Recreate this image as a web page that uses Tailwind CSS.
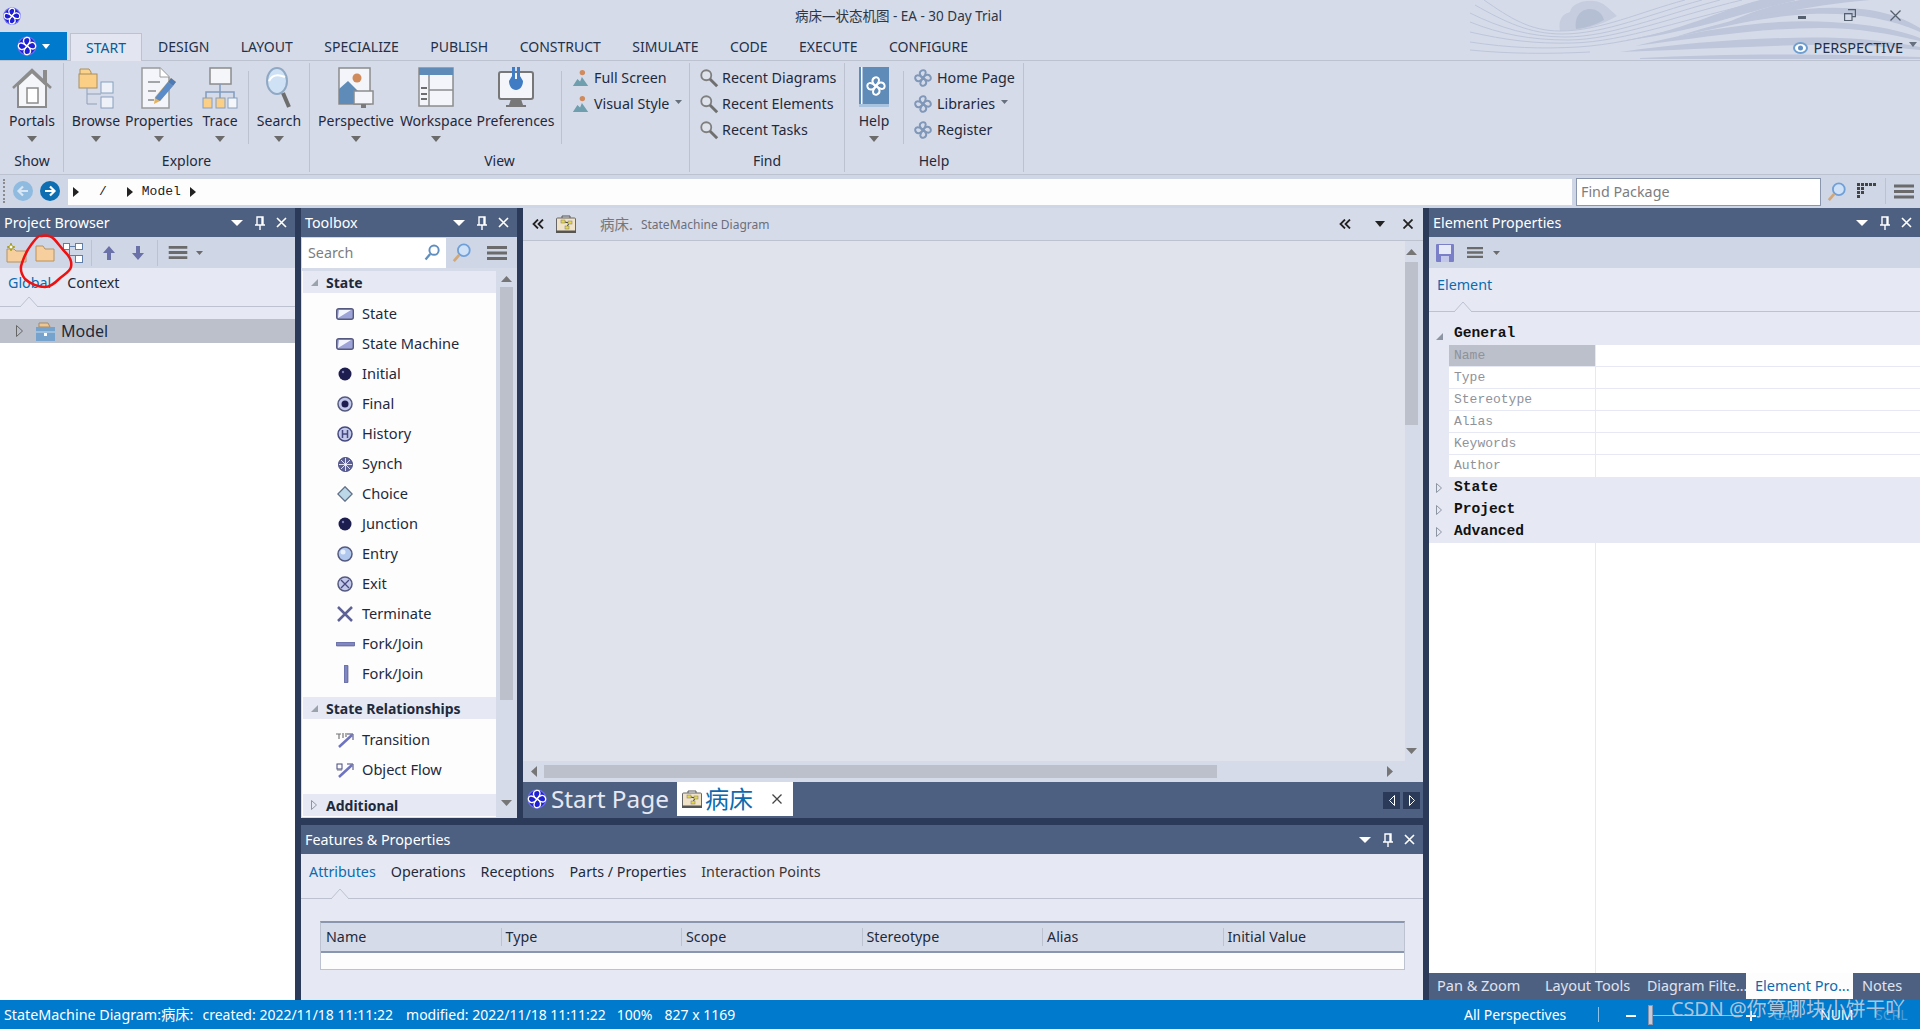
<!DOCTYPE html>
<html lang="en">
<head>
  <meta charset="UTF-8">
  <title>病床—状态机图 - EA - 30 Day Trial</title>
  <script src="https://cdn.jsdelivr.net/npm/@tailwindcss/browser@4"></script>
</head>
<body class="h-screen w-screen overflow-hidden bg-[#d6dbe9] text-[14.3px] text-[#1e2a3c] font-['Noto_Sans','Noto_Sans_CJK_SC',sans-serif]">

  <!-- shared icons -->
  <svg class="hidden">
    <symbol id="lobes" viewBox="0 0 20 20">
      <path d="M10 10C6 8 5 3 9 1.500c4-1 6 3 1 8.500z"/>
      <path d="M10 10C12 6 17 5 18.500 9c1 4-3 6-8.500 1z"/>
      <path d="M10 10C14 12 15 17 11 18.500c-4 1-6-3-1-8.500z"/>
      <path d="M10 10C8 14 3 15 1.500 11c-1-4 3-6 8.500-1z"/>
    </symbol>
    <symbol id="knot-blue" viewBox="0 0 20 20">
      <circle cx="10" cy="10" r="9.700" fill="#6a6aee"/>
      <circle cx="10" cy="10" r="8.400" fill="#1f1fd6"/>
      <use href="#lobes" width="20" height="20" fill="none" stroke="#fff" stroke-width="1.300"/>
    </symbol>
    <symbol id="knot-grey" viewBox="0 0 20 20">
      <use href="#lobes" width="20" height="20" fill="none" stroke="#7f97b8" stroke-width="2.200"/>
    </symbol>
    <symbol id="panel-ctl" viewBox="0 0 60 14">
      <path d="M2 4h12l-6 6z" fill="#fff"/>
      <path d="M28 1h6v8h-6zM26 9h10M31 9v5M33 1v8" fill="none" stroke="#fff" stroke-width="1.400"/>
      <path d="M48 2l9 9M57 2l-9 9" stroke="#fff" stroke-width="1.600"/>
    </symbol>
    <symbol id="lens-grey" viewBox="0 0 22 22">
      <circle cx="8" cy="8" r="5.500" fill="#dfe3ec" stroke="#7f7f7f" stroke-width="2"/>
      <path d="M12 12l8 8" stroke="#6f6f6f" stroke-width="3.200"/>
    </symbol>
    <symbol id="lens-blue" viewBox="0 0 22 22">
      <circle cx="13" cy="8" r="6.500" fill="#cfe1f7" stroke="#6f9fd8" stroke-width="2"/>
      <path d="M8 13l-6 7" stroke="#d2a878" stroke-width="3"/>
    </symbol>
    <symbol id="person" viewBox="0 0 20 20">
      <circle cx="11.500" cy="4" r="3" fill="#d08a5c"/>
      <path d="M1 19l5-8 3 3 2-5 7 10z" fill="#6f9fae"/>
    </symbol>
    <symbol id="burger" viewBox="0 0 20 14">
      <path d="M0 0h20v3H0zM0 5.500h20v3H0zM0 11h20v3H0z" fill="#6b6b6b"/>
    </symbol>
    <symbol id="state-box" viewBox="0 0 18 12">
      <rect x=".7" y=".7" width="16.600" height="10.600" rx="2" fill="#9ea4d8" stroke="#55597f" stroke-width="1.400"/>
      <path d="M2 10L15 2H3z" fill="#f4f6ff"/>
    </symbol>
    <symbol id="diagram-icon" viewBox="0 0 20 18">
      <path d="M6 3V1h8v2" fill="none" stroke="#555"/>
      <rect x=".5" y="3" width="19" height="14" rx="1" fill="#f0e3c8" stroke="#666"/>
      <rect x="0" y="15.500" width="20" height="2.500" fill="#555"/>
      <path d="M9 7l4 1M13 8l-2 4" stroke="#333"/>
      <rect x="5" y="5" width="4" height="3" fill="#e6d84a" stroke="#777" stroke-width=".5"/>
      <rect x="12" y="6" width="4" height="3" fill="#e6d84a" stroke="#777" stroke-width=".5"/>
      <rect x="9" y="11" width="4" height="3" fill="#e6d84a" stroke="#777" stroke-width=".5"/>
    </symbol>
  </svg>

  <!-- title bar -->
  <div class="relative h-[32px] flex items-center">
    <svg class="w-[18px] h-[18px] ml-[3px]"><use href="#knot-blue"/></svg>
    <div class="ml-[774px] text-[13.5px] whitespace-nowrap text-[#2c3646]">病床—状态机图 - EA - 30 Day Trial</div>
    <svg class="absolute top-0 right-0 w-[450px] h-[60px]" viewBox="0 0 450 60" fill="none">
      <path d="M90 31C88 20 92 14 100 12 102 4 112 0 124 1 134 2 138 8 147 16 130 26 112 30 90 31z" fill="#c5cddf"/>
      <path d="M106 29C104 18 110 9 120 9 127 9 132 13 134 20 125 25 116 28 106 29z" fill="#b5bfd4"/>
      <g stroke="#bdc6da" stroke-width="1">
        <path d="M14 0C40 18 60 31 90 31 130 31 170 12 215 0"/>
        <path d="M5 5C35 22 60 34 92 34 135 34 180 14 232 0"/>
        <path d="M0 13C30 28 60 37 95 37 140 37 190 16 250 0"/>
        <path d="M0 22C30 34 60 40 98 40 145 40 205 16 272 0"/>
        <path d="M0 32C35 40 65 44 102 43 155 42 215 18 300 0"/>
        <path d="M0 42C40 48 70 49 108 47 170 43 235 20 325 0"/>
        <path d="M0 50C40 54 80 54 120 52"/>
      </g>
      <g fill="#bdc6da">
        <path d="M330 0h70C350 4 300 14 250 26 280 12 305 4 330 0z"/>
        <path d="M150 41C210 32 250 10 290 0H325C270 14 215 34 150 41z"/>
        <path d="M205 37C270 16 340 2 400 10 425 14 440 22 450 28v4C420 18 380 12 340 14 290 17 250 28 205 37z"/>
        <path d="M165 46C230 30 300 18 360 22 400 24 430 30 450 38v3C420 34 390 28 350 28 290 28 230 38 165 46z"/>
        <path d="M150 52C220 42 300 36 370 38 400 39 430 43 450 47v3C420 47 380 44 340 45 280 46 210 50 150 52z"/>
        <path d="M170 58C250 54 330 53 450 57v2H170z"/>
      </g>
    </svg>
    <div class="absolute top-0 right-0 h-[32px] w-[130px]">
      <svg class="absolute left-[8px] top-[16px] w-[8px] h-[3px]"><rect width="8" height="3" fill="#55606f"/></svg>
      <svg class="absolute left-[54px] top-[9px] w-[12px] h-[12px]" fill="none" stroke="#55606f" stroke-width="1.200"><path d="M4 .6h7.400v7H8.500M.6 4.600h7.400v7H.6z"/></svg>
      <svg class="absolute left-[100px] top-[10px] w-[11px] h-[11px]" stroke="#55606f" stroke-width="1.300"><path d="M.5.5l10 10M10.500.5l-10 10"/></svg>
    </div>
  </div>

  <!-- menu tabs -->
  <div class="relative h-[28px] flex items-stretch text-[14px] text-[#22304a]">
    <div class="w-[67px] bg-[#007acc] flex items-center justify-center gap-[5px]">
      <svg class="w-[20px] h-[20px]"><use href="#knot-blue"/></svg>
      <svg class="w-[8px] h-[5px]"><path d="M0 0h8L4 5z" fill="#fff"/></svg>
    </div>
    <div class="ml-[3px] w-[72px] mt-[1px] h-[28px] bg-[#e3e6f0] border border-b-0 border-[#bcc2d0] flex items-center justify-center text-[#0b5c96] relative z-10">START</div>
    <div class="flex items-center whitespace-nowrap">
      <span class="ml-[16px]">DESIGN</span>
      <span class="ml-[31.500px]">LAYOUT</span>
      <span class="ml-[31.500px]">SPECIALIZE</span>
      <span class="ml-[31.500px]">PUBLISH</span>
      <span class="ml-[31.500px]">CONSTRUCT</span>
      <span class="ml-[31.500px]">SIMULATE</span>
      <span class="ml-[31.500px]">CODE</span>
      <span class="ml-[31.500px]">EXECUTE</span>
      <span class="ml-[31.500px]">CONFIGURE</span>
    </div>
    <div class="absolute right-[3px] top-[5px] flex items-center">
      <svg class="w-[15px] h-[12px]" viewBox="0 0 15 12"><ellipse cx="7.500" cy="6" rx="6.500" ry="5" fill="#fff" stroke="#6f9fd0" stroke-width="2"/><circle cx="7.500" cy="6" r="2.500" fill="#5f8fc4"/></svg>
      <span class="ml-[5px] text-[14.500px]">PERSPECTIVE</span>
      <svg class="ml-[6px] mb-[6px] w-[8px] h-[5px]"><path d="M0 0h8L4 5z" fill="#66707f"/></svg>
    </div>
  </div>

  <!-- ribbon -->
  <div class="h-[115px] flex border-y border-[#bcc2d0] bg-[#d6dbe9] text-[14px]">
    <!-- Show -->
    <div class="w-[64px] border-r border-[#bcc2d0] my-[2px] flex flex-col">
      <div class="h-[83px] flex">
        <div class="ml-[1px] w-[63px] flex flex-col items-center">
          <svg class="w-[42px] h-[42px] mt-[4px]" viewBox="0 0 42 42" fill="none">
            <path d="M7 40V18L21 5l14 13v22z" fill="#f4f6fa" stroke="#8c8c8c" stroke-width="2"/>
            <path d="M2 21L21 3l19 18" stroke="#8c8c8c" stroke-width="2.500"/><path d="M32 3h4v14h-4z" fill="#8c8c8c"/>
            <rect x="16" y="21" width="11" height="15" fill="#fff" stroke="#8c8c8c" stroke-width="1.500"/>
          </svg>
          <span class="mt-[2px] leading-[20px] whitespace-nowrap">Portals</span>
          <svg class="mt-[5px] w-[10px] h-[6px]"><path d="M0 0h10L5 6z" fill="#6b6b6b"/></svg>
        </div>
      </div>
      <div class="mt-auto h-[24px] flex items-center justify-center pl-[1px] pt-[1px]">Show</div>
    </div>
    <!-- Explore -->
    <div class="w-[246px] border-r border-[#bcc2d0] my-[2px] flex flex-col">
      <div class="h-[83px] flex">
        <div class="w-[64px] flex flex-col items-center">
          <svg class="w-[36px] h-[42px] mt-[4px]" viewBox="0 0 36 42" fill="none">
            <path d="M2 8V2h9l2 3v3" fill="#fbd38d" stroke="#a89060"/><rect x="1" y="7" width="18" height="14" fill="#fbcf85" stroke="#a89060"/>
            <path d="M9 21v16h10M9 27h14" stroke="#8f9fb8"/>
            <rect x="23" y="15" width="12" height="11" fill="#eef2f8" stroke="#86a0c0"/>
            <rect x="23" y="30" width="12" height="11" fill="#eef2f8" stroke="#86a0c0"/>
          </svg>
          <span class="mt-[2px] leading-[20px] whitespace-nowrap">Browse</span>
          <svg class="mt-[5px] w-[10px] h-[6px]"><path d="M0 0h10L5 6z" fill="#6b6b6b"/></svg>
        </div>
        <div class="w-[62px] flex flex-col items-center">
          <svg class="w-[36px] h-[42px] mt-[4px]" viewBox="0 0 36 42" fill="none">
            <path d="M1 1h18l9 9v31H1z" fill="#f3f5fa" stroke="#9a9a9a" stroke-width="1.500"/><path d="M19 1v9h9" fill="#fff" stroke="#9a9a9a"/>
            <path d="M7 15h12M7 24h8M7 33h6" stroke="#8b8b8b" stroke-width="1.500"/>
            <path d="M30 11l5 4-16 19-6 3 1-7z" fill="#e6b35c"/><path d="M30 11l5 4-3 4-5-4z" fill="#4d7ab5"/><path d="M27 15l5 4-13 15-5-3z" fill="#5b8bc8"/>
          </svg>
          <span class="mt-[2px] leading-[20px] whitespace-nowrap">Properties</span>
          <svg class="mt-[5px] w-[10px] h-[6px]"><path d="M0 0h10L5 6z" fill="#6b6b6b"/></svg>
        </div>
        <div class="ml-[2px] w-[56px] flex flex-col items-center">
          <svg class="w-[36px] h-[42px] mt-[4px]" viewBox="0 0 36 42" fill="none">
            <rect x="8" y="1" width="21" height="16" fill="#f4f6fa" stroke="#8c8c8c" stroke-width="1.500"/>
            <path d="M18 17v8M4 31v-6h28v6M18 25v6" stroke="#7f9cc0" stroke-width="1.500"/>
            <rect x="1" y="31" width="9" height="10" fill="#fbcf85" stroke="#86a0c0"/><rect x="14" y="31" width="9" height="10" fill="#fbcf85" stroke="#86a0c0"/><rect x="26" y="31" width="9" height="10" fill="#f4f6fa" stroke="#86a0c0"/>
          </svg>
          <span class="mt-[2px] leading-[20px] whitespace-nowrap">Trace</span>
          <svg class="mt-[5px] w-[10px] h-[6px]"><path d="M0 0h10L5 6z" fill="#6b6b6b"/></svg>
        </div>
        <div class="w-px h-[73px] mt-[8px] bg-[#bcc2d0]"></div>
        <div class="w-[60px] flex flex-col items-center">
          <svg class="w-[28px] h-[42px] mt-[4px]" viewBox="0 0 28 42" fill="none">
            <ellipse cx="12" cy="14" rx="10" ry="13" fill="#cfe1f5" stroke="#8fa9c4" stroke-width="2"/>
            <path d="M4 14c3-6 9-7 16-4" stroke="#fff" stroke-width="2"/>
            <path d="M18 26l6 14" stroke="#6d6d6d" stroke-width="4"/>
          </svg>
          <span class="mt-[2px] leading-[20px] whitespace-nowrap">Search</span>
          <svg class="mt-[5px] w-[10px] h-[6px]"><path d="M0 0h10L5 6z" fill="#6b6b6b"/></svg>
        </div>
      </div>
      <div class="mt-auto h-[24px] flex items-center justify-center pt-[1px]">Explore</div>
    </div>
    <!-- View -->
    <div class="w-[380px] border-r border-[#bcc2d0] my-[2px] flex flex-col">
      <div class="h-[83px] flex">
        <div class="w-[92px] flex flex-col items-center">
          <svg class="w-[36px] h-[42px] mt-[4px]" viewBox="0 0 36 42" fill="none">
            <rect x="1" y="1" width="31" height="36" fill="#f3f5fa" stroke="#8c8c8c" stroke-width="1.500"/>
            <circle cx="19" cy="11" r="4.500" fill="#d08a5c"/><path d="M1 37V22l9-8 10 10v13z" fill="#5f8bb8"/>
            <rect x="16" y="24" width="19" height="13" fill="#f3f5fa" stroke="#8c8c8c" stroke-width="1.500"/><path d="M23 37h5v4h-5z" fill="#7a7a7a"/>
          </svg>
          <span class="mt-[2px] leading-[20px] whitespace-nowrap">Perspective</span>
          <svg class="mt-[5px] w-[10px] h-[6px]"><path d="M0 0h10L5 6z" fill="#6b6b6b"/></svg>
        </div>
        <div class="w-[68px] flex flex-col items-center">
          <svg class="w-[36px] h-[42px] mt-[4px]" viewBox="0 0 36 42" fill="none">
            <rect x="1" y="1" width="34" height="38" fill="#f3f5fa" stroke="#8c8c8c" stroke-width="1.500"/><rect x="1" y="1" width="34" height="7" fill="#5f8bb8"/>
            <path d="M11 8v31M11 23h24" stroke="#8c8c8c" stroke-width="1.500"/><path d="M3 21h6M3 27h6M3 32h6" stroke="#6d6d6d" stroke-width="2"/>
          </svg>
          <span class="mt-[2px] leading-[20px] whitespace-nowrap">Workspace</span>
          <svg class="mt-[5px] w-[10px] h-[6px]"><path d="M0 0h10L5 6z" fill="#6b6b6b"/></svg>
        </div>
        <div class="w-[91px] flex flex-col items-center">
          <svg class="w-[36px] h-[42px] mt-[4px]" viewBox="0 0 36 42" fill="none">
            <rect x="1" y="5" width="34" height="27" rx="2" fill="#f3f5fa" stroke="#777" stroke-width="2"/><path d="M13 32h10l2 6H11z" fill="#777"/><path d="M8 38h20v2H8z" fill="#777"/>
            <path d="M14 0v9l-3 5c0 5 3 9 7 9s7-4 7-9l-3-5V0h-3v12h-2V0z" fill="#3f7cc4"/>
          </svg>
          <span class="mt-[2px] leading-[20px] whitespace-nowrap">Preferences</span>
        </div>
        <div class="w-px h-[73px] mt-[8px] bg-[#bcc2d0]"></div>
        <div class="pl-[10px] pt-[2px] flex flex-col text-[14.300px]">
          <div class="h-[26px] flex items-center gap-[4px] whitespace-nowrap"><svg class="w-[18px] h-[18px]"><use href="#person"/></svg>Full Screen</div>
          <div class="h-[26px] flex items-center gap-[4px] whitespace-nowrap"><svg class="w-[18px] h-[18px]"><use href="#person"/></svg>Visual Style<svg class="ml-[2px] mb-[4px] w-[7px] h-[4px]"><path d="M0 0h7L3.500 4z" fill="#66707f"/></svg></div>
        </div>
      </div>
      <div class="mt-auto h-[24px] flex items-center justify-center pt-[1px]">View</div>
    </div>
    <!-- Find -->
    <div class="w-[155px] border-r border-[#bcc2d0] my-[2px] flex flex-col">
      <div class="h-[83px] pl-[9px] pt-[2px] flex flex-col text-[14.300px]">
        <div class="h-[26px] flex items-center gap-[3px] whitespace-nowrap"><svg class="w-[20px] h-[20px]"><use href="#lens-grey"/></svg>Recent Diagrams</div>
        <div class="h-[26px] flex items-center gap-[3px] whitespace-nowrap"><svg class="w-[20px] h-[20px]"><use href="#lens-grey"/></svg>Recent Elements</div>
        <div class="h-[26px] flex items-center gap-[3px] whitespace-nowrap"><svg class="w-[20px] h-[20px]"><use href="#lens-grey"/></svg>Recent Tasks</div>
      </div>
      <div class="mt-auto h-[24px] flex items-center justify-center pt-[1px]">Find</div>
    </div>
    <!-- Help -->
    <div class="w-[179px] border-r border-[#bcc2d0] my-[2px] flex flex-col">
      <div class="h-[83px] flex">
        <div class="w-[58px] flex flex-col items-center">
          <svg class="w-[30px] h-[42px] mt-[4px]" viewBox="0 0 30 42">
            <rect width="30" height="37" fill="#5f8bb8"/><rect y="37" width="30" height="3" fill="#a9c3df"/><rect x="2" width="1.500" height="37" fill="#fff"/>
            <use href="#lobes" x="7" y="9" width="20" height="20" fill="none" stroke="#fff" stroke-width="2"/>
          </svg>
          <span class="mt-[2px] leading-[20px] whitespace-nowrap">Help</span>
          <svg class="mt-[5px] w-[10px] h-[6px]"><path d="M0 0h10L5 6z" fill="#6b6b6b"/></svg>
        </div>
        <div class="w-px h-[73px] mt-[8px] bg-[#bcc2d0]"></div>
        <div class="pl-[10px] pt-[2px] flex flex-col text-[14.300px]">
          <div class="h-[26px] flex items-center gap-[5px] whitespace-nowrap"><svg class="w-[18px] h-[18px]"><use href="#knot-grey"/></svg>Home Page</div>
          <div class="h-[26px] flex items-center gap-[5px] whitespace-nowrap"><svg class="w-[18px] h-[18px]"><use href="#knot-grey"/></svg>Libraries<svg class="ml-[1px] mb-[4px] w-[7px] h-[4px]"><path d="M0 0h7L3.500 4z" fill="#66707f"/></svg></div>
          <div class="h-[26px] flex items-center gap-[5px] whitespace-nowrap"><svg class="w-[18px] h-[18px]"><use href="#knot-grey"/></svg>Register</div>
        </div>
      </div>
      <div class="mt-auto h-[24px] flex items-center justify-center pt-[1px]">Help</div>
    </div>
  </div>

  <!-- breadcrumb bar -->
  <div class="h-[33px] flex items-start bg-[#cfd6e6]">
    <div class="ml-[3px] mt-[4px] w-[3px] h-[24px] border-l-2 border-dotted border-[#8b8b8b]"></div>
    <svg class="ml-[7px] mt-[6px] w-[20px] h-[20px]" viewBox="0 0 20 20"><circle cx="10" cy="10" r="10" fill="#8fbbe0"/><path d="M15 10H6M10 5.500L5.500 10l4.500 4.500" fill="none" stroke="#d9e6f3" stroke-width="2.200"/></svg>
    <svg class="ml-[7px] mt-[6px] w-[20px] h-[20px]" viewBox="0 0 20 20"><circle cx="10" cy="10" r="10" fill="#0d6fb2"/><path d="M5 10h9M10 5.500l4.500 4.500-4.500 4.500" fill="none" stroke="#fff" stroke-width="2.200"/></svg>
    <div class="ml-[8px] mt-[4px] w-[1504px] h-[26px] bg-[#fdfdfd] flex items-center font-['Liberation_Mono',monospace] text-[13px] text-[#222]">
      <svg class="ml-[5px] w-[6px] h-[10px]"><path d="M0 0l6 5-6 5z" fill="#222"/></svg>
      <span class="ml-[20px]">/</span>
      <svg class="ml-[20px] w-[6px] h-[10px]"><path d="M0 0l6 5-6 5z" fill="#222"/></svg>
      <span class="ml-[9px]">Model</span>
      <svg class="ml-[9px] w-[6px] h-[10px]"><path d="M0 0l6 5-6 5z" fill="#222"/></svg>
    </div>
    <div class="ml-[4px] mt-[3px] w-[245px] h-[28px] bg-white border border-[#8a96ae] flex items-center px-[4px] text-[#7d7d7d]">Find Package</div>
    <svg class="ml-[6px] mt-[7px] w-[20px] h-[20px]"><use href="#lens-blue"/></svg>
    <svg class="ml-[10px] mt-[8px] w-[19px] h-[18px]" viewBox="0 0 19 18" fill="#444"><path d="M0 0h3v3H0zM4 0h3v3H4zM8 0h3v3H8zM12 0h3v3h-3zM16 0h3v3h-3zM0 4h3v3H0zM4 4h3v3H4zM0 8h3v3H0zM4 8h3v3H4zM0 12h3v3H0z"/></svg>
    <div class="ml-[9px] mt-[3px] w-px h-[26px] bg-[#bcc2d0]"></div>
    <svg class="ml-[8px] mt-[9px] w-[20px] h-[15px]"><use href="#burger"/></svg>
  </div>

  <!-- docked panels -->
  <div class="h-[792px] flex gap-[6px] bg-[#2b3a58]">

    <!-- Project Browser -->
    <div class="relative w-[295px] flex flex-col bg-white">
      <div class="h-[29px] bg-[#4d6082] flex items-center justify-between pl-[4px] pr-[6px] text-white">
        <span>Project Browser</span>
        <svg class="w-[60px] h-[14px]"><use href="#panel-ctl"/></svg>
      </div>
      <div class="h-[31px] bg-[#cfd6e6] flex items-center pl-[6px]">
        <svg class="w-[21px] h-[20px]" viewBox="0 0 21 20"><path d="M1 19V6h7l2 2h10v11z" fill="#f7cf9f" stroke="#b8925f"/><path d="M5 0l1 3 3 1-3 1-1 3-1-3-3-1 3-1z" fill="#fff" stroke="#a8a020"/></svg>
        <svg class="ml-[8px] w-[20px] h-[18px]" viewBox="0 0 20 18"><path d="M1 17V2h7l2 3h9v12z" fill="#f7cf9f" stroke="#b8925f"/></svg>
        <svg class="ml-[8px] w-[20px] h-[20px]" viewBox="0 0 20 20" fill="#fff" stroke="#5f7ea8"><rect x=".5" y=".5" width="6" height="6"/><rect x="12.500" y=".5" width="7" height="6"/><rect x="12.500" y="12.500" width="7" height="7"/><path d="M6.500 3.500h6M6.500 3.500v9h6" fill="none"/></svg>
        <div class="ml-[8px] w-px h-[26px] bg-[#bcc2d0]"></div>
        <svg class="ml-[11px] w-[12px] h-[14px]" viewBox="0 0 12 14"><path d="M6 0l6 7H8v7H4V7H0z" fill="#6a70a8"/></svg>
        <svg class="ml-[17px] w-[12px] h-[14px]" viewBox="0 0 12 14"><path d="M6 14L0 7h4V0h4v7h4z" fill="#6a70a8"/></svg>
        <div class="ml-[13px] w-px h-[26px] bg-[#bcc2d0]"></div>
        <svg class="ml-[10px] w-[20px] h-[13px]"><use href="#burger"/></svg>
        <svg class="ml-[8px] w-[7px] h-[4px]"><path d="M0 0h7L3.500 4z" fill="#6b6b6b"/></svg>
      </div>
      <div class="relative h-[39px] bg-[#e6e9f3] border-b border-[#bcc2d0] flex items-start pt-[4px] pl-[8px]">
        <span class="text-[#0b6bb0]">Global</span><span class="ml-[16px]">Context</span>
        <svg class="absolute left-[20px] bottom-[-1px] w-[18px] h-[11px]"><path d="M0 11L9 1l9 10" fill="#e6e9f3" stroke="#bcc2d0"/></svg>
      </div>
      <div class="h-[12px] bg-[#e6e9f3]"></div>
      <div class="h-[24px] bg-[#bcc0ca] flex items-center text-[16px]">
        <svg class="ml-[16px] w-[7px] h-[12px]"><path d="M.5.5l6 5.500-6 5.500z" fill="none" stroke="#666"/></svg>
        <svg class="ml-[13px] w-[19px] h-[19px]" viewBox="0 0 19 19"><path d="M3 5V1h9l2 4z" fill="#ecc795" stroke="#a88b62"/><path d="M0 5h19v14H0z" fill="#76a3ce"/><path d="M0 10h19" stroke="#c7dcec"/><rect x="8" y="11" width="3" height="3" fill="#fff"/></svg>
        <span class="ml-[6px]">Model</span>
      </div>
      <!-- hand-drawn red ring from the screenshot -->
      <svg class="absolute left-[14px] top-[24px] w-[66px] h-[60px]" viewBox="14 232 66 60" fill="none">
        <path d="M41 236c5-1 10 0 13 3 4 4 7 9 12 14 4 4 6 9 5 14-1 5-8 8-12 12-4 4-9 8-14 8-6 0-15-3-20-8-4-5-5-11-3-16 2-6 5-13 9-18 3-4 5-7 8-9" stroke="#ee1111" stroke-width="2.500" stroke-linecap="round"/>
      </svg>
    </div>

    <!-- centre column -->
    <div class="w-[1122px] flex flex-col gap-[7px]">
      <div class="h-[610px] flex gap-[6px]">

        <!-- Toolbox -->
        <div class="w-[216px] flex flex-col bg-[#d6dbe9]">
          <div class="h-[29px] bg-[#4d6082] flex items-center justify-between pl-[4px] pr-[6px] text-white">
            <span>Toolbox</span>
            <svg class="w-[60px] h-[14px]"><use href="#panel-ctl"/></svg>
          </div>
          <div class="h-[31px] flex items-center bg-[#cfd6e6]">
            <div class="ml-[1px] w-[144px] h-[30px] bg-white flex items-center justify-between pl-[6px] pr-[5px] text-[#7d7d7d]">
              <span>Search</span>
              <svg class="w-[17px] h-[17px]" viewBox="0 0 22 22" fill="none"><circle cx="13" cy="8" r="6" stroke="#5f8fc0" stroke-width="2.500"/><path d="M8 13l-6 7" stroke="#5f8fc0" stroke-width="3"/></svg>
            </div>
            <svg class="ml-[6px] w-[20px] h-[20px]"><use href="#lens-blue"/></svg>
            <svg class="ml-[15px] w-[20px] h-[14px]"><use href="#burger"/></svg>
          </div>
          <div class="h-[550px] flex">
            <div class="ml-[1px] mt-[3px] w-[194px] h-[546px] bg-[#fdfdfd] overflow-hidden pl-[1px] text-[14.600px]">
              <div class="h-[22px] bg-[#e6e9f3] flex items-center font-bold text-[14px]">
                <svg class="ml-[8px] w-[7px] h-[7px]"><path d="M7 0v7H0z" fill="#9aa2ad"/></svg><span class="ml-[8px]">State</span>
              </div>
              <div class="h-[6px]"></div>
              <div class="h-[30px] flex items-center pl-[32px]"><span class="w-[20px] flex justify-center"><svg class="w-[18px] h-[12px]"><use href="#state-box"/></svg></span><span class="ml-[7px]">State</span></div>
              <div class="h-[30px] flex items-center pl-[32px]"><span class="w-[20px] flex justify-center"><svg class="w-[18px] h-[12px]"><use href="#state-box"/></svg></span><span class="ml-[7px]">State Machine</span></div>
              <div class="h-[30px] flex items-center pl-[32px]"><span class="w-[20px] flex justify-center"><svg class="w-[14px] h-[14px]"><circle cx="7" cy="7" r="6.500" fill="#1d1d4f"/><circle cx="5" cy="5" r="1.200" fill="#7a7ab0"/></svg></span><span class="ml-[7px]">Initial</span></div>
              <div class="h-[30px] flex items-center pl-[32px]"><span class="w-[20px] flex justify-center"><svg class="w-[16px] h-[16px]"><circle cx="8" cy="8" r="7" fill="#c3c9ea" stroke="#55597f" stroke-width="1.500"/><circle cx="8" cy="8" r="3.500" fill="#1d1d4f"/></svg></span><span class="ml-[7px]">Final</span></div>
              <div class="h-[30px] flex items-center pl-[32px]"><span class="w-[20px] flex justify-center"><svg class="w-[16px] h-[16px]" fill="none" stroke="#45497f"><circle cx="8" cy="8" r="7" fill="#c3c9ea" stroke-width="1.500"/><path d="M5.500 4v8M10.500 4v8M5.500 8h5" stroke-width="1.500"/></svg></span><span class="ml-[7px]">History</span></div>
              <div class="h-[30px] flex items-center pl-[32px]"><span class="w-[20px] flex justify-center"><svg class="w-[15px] h-[15px]" stroke="#fff"><circle cx="7.500" cy="7.500" r="7" fill="#5d6196" stroke="#45497f"/><path d="M7.500 1v13M1 7.500h13M3 3l9 9M12 3l-9 9" stroke-width=".8"/></svg></span><span class="ml-[7px]">Synch</span></div>
              <div class="h-[30px] flex items-center pl-[32px]"><span class="w-[20px] flex justify-center"><svg class="w-[16px] h-[16px]"><path d="M8 .8l7.200 7.200L8 15.200.8 8z" fill="#bcd8e8" stroke="#5f6f88" stroke-width="1.300"/></svg></span><span class="ml-[7px]">Choice</span></div>
              <div class="h-[30px] flex items-center pl-[32px]"><span class="w-[20px] flex justify-center"><svg class="w-[14px] h-[14px]"><circle cx="7" cy="7" r="6.500" fill="#1d1d4f"/><circle cx="5" cy="5" r="1.200" fill="#7a7ab0"/></svg></span><span class="ml-[7px]">Junction</span></div>
              <div class="h-[30px] flex items-center pl-[32px]"><span class="w-[20px] flex justify-center"><svg class="w-[16px] h-[16px]"><circle cx="8" cy="8" r="7" fill="#b0c8ee" stroke="#55597f" stroke-width="1.500"/><circle cx="6" cy="6" r="2.500" fill="#e8f0fc"/></svg></span><span class="ml-[7px]">Entry</span></div>
              <div class="h-[30px] flex items-center pl-[32px]"><span class="w-[20px] flex justify-center"><svg class="w-[16px] h-[16px]"><circle cx="8" cy="8" r="7" fill="#c3c9ea" stroke="#55597f" stroke-width="1.500"/><path d="M4 4l8 8M12 4l-8 8" stroke="#45497f" stroke-width="1.300"/></svg></span><span class="ml-[7px]">Exit</span></div>
              <div class="h-[30px] flex items-center pl-[32px]"><span class="w-[20px] flex justify-center"><svg class="w-[16px] h-[16px]"><path d="M1 1l14 14M15 1L1 15" stroke="#5d6196" stroke-width="2.500"/></svg></span><span class="ml-[7px]">Terminate</span></div>
              <div class="h-[30px] flex items-center pl-[32px]"><span class="w-[20px] flex justify-center"><svg class="w-[19px] h-[5px]"><rect width="19" height="4" rx="1" fill="#8187c0" stroke="#45497f" stroke-width=".6"/></svg></span><span class="ml-[7px]">Fork/Join</span></div>
              <div class="h-[30px] flex items-center pl-[32px]"><span class="w-[20px] flex justify-center"><svg class="ml-[2px] w-[5px] h-[18px]"><rect width="4" height="18" rx="1" fill="#8187c0" stroke="#45497f" stroke-width=".6"/></svg></span><span class="ml-[7px]">Fork/Join</span></div>
              <div class="h-[8px]"></div>
              <div class="h-[22px] bg-[#e6e9f3] flex items-center font-bold text-[14px]">
                <svg class="ml-[8px] w-[7px] h-[7px]"><path d="M7 0v7H0z" fill="#9aa2ad"/></svg><span class="ml-[8px]">State Relationships</span>
              </div>
              <div class="h-[6px]"></div>
              <div class="h-[30px] flex items-center pl-[32px]"><span class="w-[20px] flex justify-center"><svg class="w-[18px] h-[17px]" fill="none"><path d="M3 15L16 3" stroke="#6d73c0" stroke-width="2.500"/><path d="M11 2h6v6" stroke="#45497f"/><path d="M0 2h5M3 2v5M7 1v5M10 1v4" stroke="#777" stroke-width="1.200"/></svg></span><span class="ml-[7px]">Transition</span></div>
              <div class="h-[30px] flex items-center pl-[32px]"><span class="w-[20px] flex justify-center"><svg class="w-[18px] h-[17px]" fill="none"><path d="M3 15L16 3" stroke="#6d73c0" stroke-width="2.500"/><path d="M11 2h6v6" stroke="#45497f"/><rect x="1" y="2" width="5" height="5" stroke="#45497f"/><path d="M1 8h5" stroke="#777"/></svg></span><span class="ml-[7px]">Object Flow</span></div>
              <div class="h-[9px]"></div>
              <div class="h-[22px] bg-[#e6e9f3] flex items-center font-bold text-[14px]">
                <svg class="ml-[8px] w-[6px] h-[10px]"><path d="M.5.5l5 4.500-5 4.500z" fill="none" stroke="#8d95a3"/></svg><span class="ml-[9px]">Additional</span>
              </div>
            </div>
            <div class="ml-[4px] w-[13px] flex flex-col items-center">
              <svg class="mt-[8px] w-[11px] h-[6px]"><path d="M5.500 0L11 6H0z" fill="#767676"/></svg>
              <div class="mt-[5px] w-[13px] h-[413px] bg-[#bcc0ca]"></div>
              <svg class="mt-[100px] w-[11px] h-[6px]"><path d="M0 0h11L5.500 6z" fill="#767676"/></svg>
            </div>
          </div>
        </div>

        <!-- Diagram -->
        <div class="w-[900px] flex flex-col bg-[#d6dbe9]">
          <div class="h-[33px] border-b border-[#bcc2d0] flex items-center text-[#6b6f7a] text-[12px]">
            <svg class="ml-[9px] w-[12px] h-[10px]" fill="none" stroke="#222" stroke-width="1.800"><path d="M6 .5L1.500 5 6 9.500M11 .5L6.500 5 11 9.500"/></svg>
            <svg class="ml-[12px] w-[20px] h-[18px]"><use href="#diagram-icon"/></svg>
            <span class="ml-[24px] mt-[2px] text-[14.500px] text-[#777]">病床.</span>
            <span class="ml-[8px] mt-[2px] whitespace-nowrap">StateMachine Diagram</span>
            <svg class="ml-auto w-[12px] h-[10px]" fill="none" stroke="#222" stroke-width="1.800"><path d="M6 .5L1.500 5 6 9.500M11 .5L6.500 5 11 9.500"/></svg>
            <svg class="ml-[24px] w-[10px] h-[6px]"><path d="M0 0h10L5 6z" fill="#222"/></svg>
            <svg class="ml-[18px] mr-[10px] w-[10px] h-[10px]" stroke="#222" stroke-width="1.800"><path d="M.5.5l9 9M9.500.5l-9 9"/></svg>
          </div>
          <div class="h-[520px] flex">
            <div class="w-[882px] bg-[#e0e3ec]"></div>
            <div class="w-[18px] flex flex-col items-center pr-[5px]">
              <svg class="mt-[8px] w-[11px] h-[6px]"><path d="M5.500 0L11 6H0z" fill="#767676"/></svg>
              <div class="mt-[7px] w-[13px] h-[163px] bg-[#bcc0ca]"></div>
              <svg class="mt-[323px] w-[11px] h-[6px]"><path d="M0 0h11L5.500 6z" fill="#767676"/></svg>
            </div>
          </div>
          <div class="h-[21px] flex items-center">
            <svg class="ml-[8px] w-[6px] h-[11px]"><path d="M6 0v11L0 5.500z" fill="#767676"/></svg>
            <div class="ml-[7px] w-[673px] h-[13px] bg-[#bcc0ca]"></div>
            <svg class="ml-[170px] w-[6px] h-[11px]"><path d="M0 0v11l6-5.500z" fill="#767676"/></svg>
          </div>
          <div class="h-[36px] bg-[#4d6082] flex items-start">
            <div class="h-[34px] w-[154px] flex items-center pl-[4px] text-[#e6e9f3] text-[24.300px] whitespace-nowrap">
              <svg class="w-[20px] h-[20px]"><use href="#knot-blue"/></svg><span class="ml-[4px]">Start Page</span>
            </div>
            <div class="h-[34px] w-[116px] bg-white flex items-center pl-[5px] text-[#0b6bb0] text-[24px]">
              <svg class="w-[20px] h-[18px]"><use href="#diagram-icon"/></svg>
              <span class="ml-[3px]">病床</span>
              <svg class="ml-[19px] w-[10px] h-[10px]" stroke="#444" stroke-width="1.300"><path d="M.5.5l9 9M9.500.5l-9 9"/></svg>
            </div>
            <div class="ml-auto mr-[3px] mt-[10px] flex gap-[3px]">
              <div class="w-[17px] h-[17px] bg-[#2b3a58] flex items-center justify-center"><svg class="w-[6px] h-[11px]"><path d="M5.500.5v10L.5 5.500z" fill="none" stroke="#fff"/></svg></div>
              <div class="w-[17px] h-[17px] bg-[#2b3a58] flex items-center justify-center"><svg class="w-[6px] h-[11px]"><path d="M.5.500v10l5-5z" fill="none" stroke="#fff"/></svg></div>
            </div>
          </div>
        </div>
      </div>

      <!-- Features & Properties -->
      <div class="h-[175px] flex flex-col bg-[#e6e9f3]">
        <div class="h-[29px] bg-[#4d6082] flex items-center justify-between pl-[4px] pr-[6px] text-white">
          <span>Features &amp; Properties</span>
          <svg class="w-[60px] h-[14px]"><use href="#panel-ctl"/></svg>
        </div>
        <div class="relative h-[45px] border-b border-[#bcc2d0] flex items-start pt-[7px] pl-[8px]">
          <span class="text-[#0b6bb0]">Attributes</span>
          <span class="ml-[15px]">Operations</span>
          <span class="ml-[15px]">Receptions</span>
          <span class="ml-[15px]">Parts / Properties</span>
          <span class="ml-[15px] text-[#3c3434]">Interaction Points</span>
          <svg class="absolute left-[30px] bottom-[-1px] w-[18px] h-[11px]"><path d="M0 11L9 1l9 10" fill="#e6e9f3" stroke="#bcc2d0"/></svg>
        </div>
        <div class="ml-[19px] mt-[22px] w-[1085px] h-[49px] border border-t-2 border-[#bcc2d0] border-t-[#8a96ae] flex flex-col">
          <div class="h-[30px] bg-[#d6dbe9] border-b-2 border-[#8a96ae] grid grid-cols-6 items-center">
            <span class="h-[18px] flex items-center pl-[5px] border-r border-[#bcc2d0]">Name</span>
            <span class="h-[18px] flex items-center pl-[4px] border-r border-[#bcc2d0]">Type</span>
            <span class="h-[18px] flex items-center pl-[4px] border-r border-[#bcc2d0]">Scope</span>
            <span class="h-[18px] flex items-center pl-[4px] border-r border-[#bcc2d0]">Stereotype</span>
            <span class="h-[18px] flex items-center pl-[4px] border-r border-[#bcc2d0]">Alias</span>
            <span class="h-[18px] flex items-center pl-[4px]">Initial Value</span>
          </div>
          <div class="flex-1 bg-[#fdfdfd]"></div>
        </div>
      </div>
    </div>

    <!-- Element Properties -->
    <div class="w-[491px] flex flex-col bg-white">
      <div class="h-[29px] bg-[#4d6082] flex items-center justify-between pl-[4px] pr-[6px] text-white">
        <span>Element Properties</span>
        <svg class="w-[60px] h-[14px]"><use href="#panel-ctl"/></svg>
      </div>
      <div class="h-[31px] bg-[#cfd6e6] flex items-center pl-[7px]">
        <svg class="w-[18px] h-[18px]" viewBox="0 0 18 18"><rect width="18" height="18" rx="1" fill="#7a7fc8"/><rect x="3" y="1" width="12" height="9" fill="#e6e9f8"/><rect x="5" y="12" width="8" height="6" fill="#c3c7ea"/></svg>
        <svg class="ml-[13px] w-[16px] h-[13px]"><use href="#burger"/></svg>
        <svg class="ml-[10px] w-[7px] h-[4px]"><path d="M0 0h7L3.500 4z" fill="#6b6b6b"/></svg>
      </div>
      <div class="relative h-[44px] bg-[#e6e9f3] border-b border-[#bcc2d0] pl-[8px] pt-[6px]">
        <span class="text-[#0b6bb0]">Element</span>
        <svg class="absolute left-[25px] bottom-[-1px] w-[18px] h-[11px]"><path d="M0 11L9 1l9 10" fill="#e6e9f3" stroke="#bcc2d0"/></svg>
      </div>
      <div class="bg-[#e6e9f3] font-['Liberation_Mono',monospace]">
        <div class="h-[33px] flex items-end text-[14.600px] font-bold text-[#111]">
          <svg class="ml-[7px] mb-[5px] w-[7px] h-[7px]"><path d="M7 0v7H0z" fill="#8d95a3"/></svg><span class="ml-[11px]">General</span>
        </div>
        <div class="ml-[20px] text-[13px] text-[#8e929b]">
          <div class="h-[22px] flex"><span class="w-[146px] h-[21px] bg-[#bcc0ca] pl-[5px] leading-[21px]">Name</span><span class="ml-[1px] flex-1 h-[21px] bg-white"></span></div>
          <div class="h-[22px] flex"><span class="w-[146px] h-[21px] bg-white pl-[5px] leading-[21px]">Type</span><span class="ml-[1px] flex-1 h-[21px] bg-white"></span></div>
          <div class="h-[22px] flex"><span class="w-[146px] h-[21px] bg-white pl-[5px] leading-[21px]">Stereotype</span><span class="ml-[1px] flex-1 h-[21px] bg-white"></span></div>
          <div class="h-[22px] flex"><span class="w-[146px] h-[21px] bg-white pl-[5px] leading-[21px]">Alias</span><span class="ml-[1px] flex-1 h-[21px] bg-white"></span></div>
          <div class="h-[22px] flex"><span class="w-[146px] h-[21px] bg-white pl-[5px] leading-[21px]">Keywords</span><span class="ml-[1px] flex-1 h-[21px] bg-white"></span></div>
          <div class="h-[22px] flex"><span class="w-[146px] h-[22px] bg-white pl-[5px] leading-[21px]">Author</span><span class="ml-[1px] flex-1 h-[22px] bg-white"></span></div>
        </div>
        <div class="h-[22px] flex items-center text-[14.600px] font-bold text-[#111]"><svg class="ml-[7px] w-[6px] h-[10px]"><path d="M.5.5l5 4.500-5 4.500z" fill="none" stroke="#8d95a3"/></svg><span class="ml-[12px]">State</span></div>
        <div class="h-[22px] flex items-center text-[14.600px] font-bold text-[#111]"><svg class="ml-[7px] w-[6px] h-[10px]"><path d="M.5.5l5 4.500-5 4.500z" fill="none" stroke="#8d95a3"/></svg><span class="ml-[12px]">Project</span></div>
        <div class="h-[22px] flex items-center text-[14.600px] font-bold text-[#111]"><svg class="ml-[7px] w-[6px] h-[10px]"><path d="M.5.5l5 4.500-5 4.500z" fill="none" stroke="#8d95a3"/></svg><span class="ml-[12px]">Advanced</span></div>
      </div>
      <div class="flex-1 flex"><div class="ml-[166px] w-px bg-[#e6e9f3]"></div></div>
      <div class="h-[27px] bg-[#4d6082] flex items-start text-[14.500px] text-[#e0e4ee] whitespace-nowrap">
        <span class="ml-[8px] w-[108px] mt-[2px]">Pan &amp; Zoom</span>
        <span class="w-[102px] mt-[2px]">Layout Tools</span>
        <span class="w-[99px] mt-[2px] text-[14.200px]">Diagram Filte...</span>
        <span class="h-[26px] w-[107px] bg-[#fdfdfd] pl-[9px] pt-[2px] text-[#0b6bb0]">Element Pro...</span>
        <span class="ml-[9px] mt-[2px]">Notes</span>
      </div>
    </div>
  </div>

  <!-- status bar -->
  <div class="relative h-[29px] bg-[#007acc] flex items-center text-white text-[14px] whitespace-nowrap">
    <span class="ml-[4px] text-[14.300px]">StateMachine Diagram:病床:</span>
    <span class="ml-[9px]">created: 2022/11/18 11:11:22</span>
    <span class="ml-[13px]">modified: 2022/11/18 11:11:22</span>
    <span class="ml-[11px]">100%</span>
    <span class="ml-[12px]">827 x 1169</span>
    <span class="absolute left-[1464px]">All Perspectives</span>
    <span class="absolute left-[1598px] top-[7px] w-px h-[15px] bg-[#8fc4e8]"></span>
    <span class="absolute left-[1626px] top-[15px] w-[10px] h-[2px] bg-white"></span>
    <span class="absolute left-[1648px] top-[5px] w-[5px] h-[20px] bg-[#c5cbd9] border border-[#8a96ae]"></span>
    <span class="absolute left-[1653px] top-[15px] w-[90px] h-px bg-[#8fc4e8]"></span>
    <span class="absolute left-[1746px] top-[15px] w-[10px] h-[2px] bg-white"></span>
    <span class="absolute left-[1750px] top-[11px] w-[2px] h-[10px] bg-white"></span>
    <span class="absolute left-[1773px] text-[#4f9cd2]">CAP</span>
    <span class="absolute left-[1820px]">NUM</span>
    <span class="absolute left-[1875px] text-[#4f9cd2]">SCRL</span>
    <!-- CSDN watermark sits over the bar -->
    <span class="absolute left-[1671px] top-[-6px] text-[19.800px] text-[#c3cede]/90">CSDN @你算哪块小饼干吖</span>
  </div>
</body>
</html>
